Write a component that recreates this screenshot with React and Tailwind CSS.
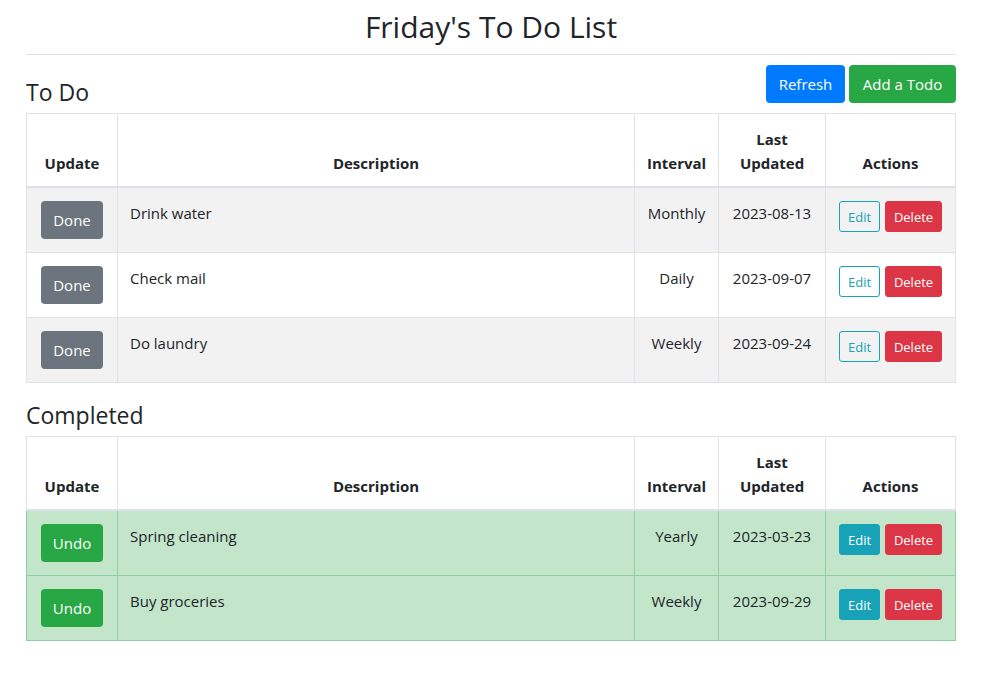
import React from 'react'

const todos = [
  { desc: 'Drink water', interval: 'Monthly', date: '2023-08-13' },
  { desc: 'Check mail', interval: 'Daily', date: '2023-09-07' },
  { desc: 'Do laundry', interval: 'Weekly', date: '2023-09-24' },
]

const completed = [
  { desc: 'Spring cleaning', interval: 'Yearly', date: '2023-03-23' },
  { desc: 'Buy groceries', interval: 'Weekly', date: '2023-09-29' },
]

const th = 'border border-[#dee2e6] border-b-2 px-3 pt-[13px] pb-[11px] align-bottom text-center text-[15px] font-bold leading-6'

function TodoTable({ rows, done }) {
  return (
    <table className="mb-4 w-full table-fixed border-collapse border border-[#dee2e6]">
      <colgroup>
        <col className="w-[91px]" />
        <col />
        <col className="w-[84px]" />
        <col className="w-[107px]" />
        <col className="w-[130px]" />
      </colgroup>
      <thead>
        <tr>
          <th className={th}>Update</th>
          <th className={th}>Description</th>
          <th className={th}>Interval</th>
          <th className={th}>
            Last
            <br />
            Updated
          </th>
          <th className={th}>Actions</th>
        </tr>
      </thead>
      <tbody>
        {rows.map((r, i) => {
          const td = [
            'border px-3 pt-[13px] pb-[11px] align-top text-[15px] leading-6',
            done ? 'border-[#8fd19e] bg-[#c3e6cb]' : 'border-[#dee2e6]',
            !done && i % 2 === 0 ? 'bg-[#f2f2f2]' : '',
          ].join(' ')
          return (
            <tr key={r.desc}>
              <td className={`${td} text-center`}>
                {done ? (
                  <button className="mb-[2px] h-[38px] rounded bg-[#28a745] px-3 text-[15px] leading-6 text-white">Undo</button>
                ) : (
                  <button className="mb-[2px] h-[38px] rounded bg-[#6c757d] px-3 text-[15px] leading-6 text-white">Done</button>
                )}
              </td>
              <td className={td}>{r.desc}</td>
              <td className={`${td} text-center`}>{r.interval}</td>
              <td className={`${td} text-center`}>{r.date}</td>
              <td className={`${td} text-center`}>
                <div className="mb-[2px] flex justify-center gap-[5px]">
                  {done ? (
                    <button className="h-[31px] w-[41px] rounded-[3px] border border-[#17a2b8] bg-[#17a2b8] text-[13px] text-white">Edit</button>
                  ) : (
                    <button className="h-[31px] w-[41px] rounded-[3px] border border-[#17a2b8] bg-transparent text-[13px] text-[#17a2b8]">Edit</button>
                  )}
                  <button className="h-[31px] w-[57px] rounded-[3px] border border-[#dc3545] bg-[#dc3545] text-[13px] text-white">Delete</button>
                </div>
              </td>
            </tr>
          )
        })}
      </tbody>
    </table>
  )
}

export default function App() {
  return (
    <div className="min-h-screen bg-white font-['Open_Sans',sans-serif] text-[#212529]">
      <div className="ml-[26px] w-[930px] pt-2">
        <h1 className="border-b border-[#dee2e6] pb-2 text-center text-[30px] leading-[38px] font-normal">Friday's To Do List</h1>

        <div className="mt-[10px] mb-2 flex items-end justify-between">
          <h3 className="text-[23px] leading-[25px]">To Do</h3>
          <div className="mb-[2px] flex gap-1">
            <button className="h-[38px] w-[79px] rounded bg-[#007bff] text-[15px] text-white">Refresh</button>
            <button className="h-[38px] w-[107px] rounded bg-[#28a745] text-[15px] text-white">Add a Todo</button>
          </div>
        </div>
        <TodoTable rows={todos} />

        <h3 className="mb-2 pt-[4px] text-[23px] leading-[25px]">Completed</h3>
        <TodoTable rows={completed} done />
      </div>
    </div>
  )
}
